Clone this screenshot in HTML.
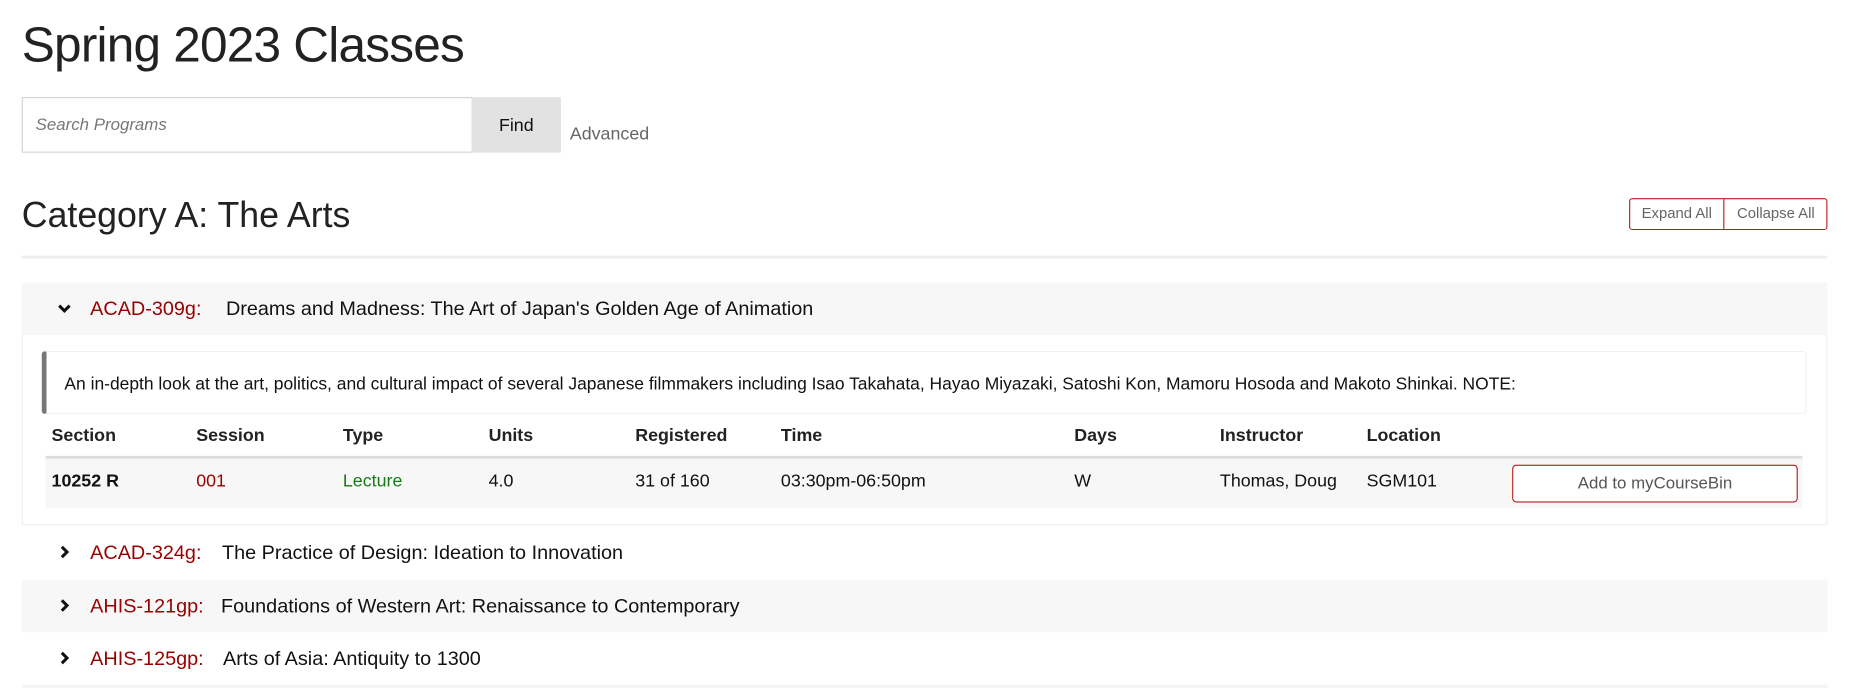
<!DOCTYPE html>
<html><head><meta charset="utf-8"><style>
*{margin:0;padding:0;box-sizing:border-box}
body{width:1864px;height:687px;overflow:hidden;background:#fff;font-family:"Liberation Sans",sans-serif;color:#111;position:relative}
#w{position:absolute;left:0;top:2px;width:1881px;height:700px;transform:scale(0.991);transform-origin:0 0}
.a{position:absolute;white-space:nowrap}
.row{position:absolute;left:22px;width:1822px;height:53px}
.chev{position:absolute;left:36px;top:19px;width:14px;height:14px}
.code{position:absolute;left:69px;top:16px;font-size:20px;color:#990000}
.ttl{position:absolute;top:16px;font-size:20px;color:#111}
.th{position:absolute;top:427px;font-size:18px;font-weight:bold;color:#222}
.td{position:absolute;top:473px;font-size:18px;color:#111}
</style></head><body><div id="w">
<div class="a" style="left:22px;top:14px;font-size:50px;letter-spacing:-0.8px;color:#222">Spring 2023 Classes</div>
<div class="a" style="left:22px;top:96px;width:455px;height:56px;border:1px solid #ccc;"></div>
<div class="a" style="left:36px;top:114px;font-size:17px;font-style:italic;color:#777">Search Programs</div>
<div class="a" style="left:476px;top:96px;width:90px;height:56px;background:#e2e2e2;font-size:18px;line-height:56px;text-align:center;color:#111">Find</div>
<div class="a" style="left:575px;top:123px;font-size:18px;color:#666">Advanced</div>
<div class="a" style="left:22px;top:194px;font-size:36px;color:#222">Category A: The Arts</div>
<div class="a" style="left:1644px;top:198px;width:200px;height:32px;border:1px solid #a00;border-radius:3px;font-size:15px;color:#666;line-height:30px">
<span style="position:absolute;left:0;width:94px;text-align:center">Expand All</span>
<span style="position:absolute;left:94px;top:0;width:1px;height:30px;background:#a00"></span>
<span style="position:absolute;left:95px;width:104px;text-align:center">Collapse All</span></div>
<div class="a" style="left:22px;top:256px;width:1822px;height:3px;background:#eee"></div>

<div class="row" style="top:283px;background:#f7f7f7">
<svg class="chev" viewBox="0 0 16 16"><path d="M2 5l6 6 6-6" fill="none" stroke="#111" stroke-width="3.5"/></svg>
<span class="code">ACAD-309g:</span><span class="ttl" style="left:206px">Dreams and Madness: The Art of Japan's Golden Age of Animation</span></div>
<div class="a" style="left:22px;top:336px;width:1822px;height:192px;border:1px solid #eee;border-top:none"></div>
<div class="a" style="left:42px;top:352px;width:1781px;height:64px;border:1px solid #eee;border-left:5px solid #777;border-radius:4px"></div>
<div class="a" style="left:65px;top:375px;font-size:17.6px;color:#111">An in-depth look at the art, politics, and cultural impact of several Japanese filmmakers including Isao Takahata, Hayao Miyazaki, Satoshi Kon, Mamoru Hosoda and Makoto Shinkai. NOTE:</div>
<div class="th" style="left:52px">Section</div><div class="th" style="left:198px">Session</div><div class="th" style="left:346px">Type</div><div class="th" style="left:493px">Units</div><div class="th" style="left:641px">Registered</div><div class="th" style="left:788px">Time</div><div class="th" style="left:1084px">Days</div><div class="th" style="left:1231px">Instructor</div><div class="th" style="left:1379px">Location</div>
<div class="a" style="left:46px;top:458px;width:1773px;height:3px;background:#ddd"></div>
<div class="a" style="left:46px;top:461px;width:1773px;height:50px;background:#f7f7f7"></div>
<div class="td" style="left:52px;font-weight:bold">10252 R</div><div class="td" style="left:198px;color:#990000">001</div><div class="td" style="left:346px;color:#1a7a1a">Lecture</div><div class="td" style="left:493px">4.0</div><div class="td" style="left:641px">31 of 160</div><div class="td" style="left:788px">03:30pm-06:50pm</div><div class="td" style="left:1084px">W</div><div class="td" style="left:1231px">Thomas, Doug</div><div class="td" style="left:1379px">SGM101</div>
<div class="a" style="left:1526px;top:467px;width:288px;height:38px;border:1px solid #a00;border-radius:4px;background:#fff;font-size:17px;color:#555;text-align:center;line-height:36px">Add to myCourseBin</div>

<div class="row" style="top:529px">
<svg class="chev" viewBox="0 0 16 16"><path d="M5 2l6 6-6 6" fill="none" stroke="#111" stroke-width="3.5"/></svg>
<span class="code">ACAD-324g:</span><span class="ttl" style="left:202px">The Practice of Design: Ideation to Innovation</span></div>
<div class="row" style="top:583px;background:#f7f7f7">
<svg class="chev" viewBox="0 0 16 16"><path d="M5 2l6 6-6 6" fill="none" stroke="#111" stroke-width="3.5"/></svg>
<span class="code">AHIS-121gp:</span><span class="ttl" style="left:201px">Foundations of Western Art: Renaissance to Contemporary</span></div>
<div class="row" style="top:636px">
<svg class="chev" viewBox="0 0 16 16"><path d="M5 2l6 6-6 6" fill="none" stroke="#111" stroke-width="3.5"/></svg>
<span class="code">AHIS-125gp:</span><span class="ttl" style="left:203px">Arts of Asia: Antiquity to 1300</span></div>
<div class="a" style="left:22px;top:689px;width:1822px;height:3px;background:#f4f4f4"></div>
</div></body></html>
